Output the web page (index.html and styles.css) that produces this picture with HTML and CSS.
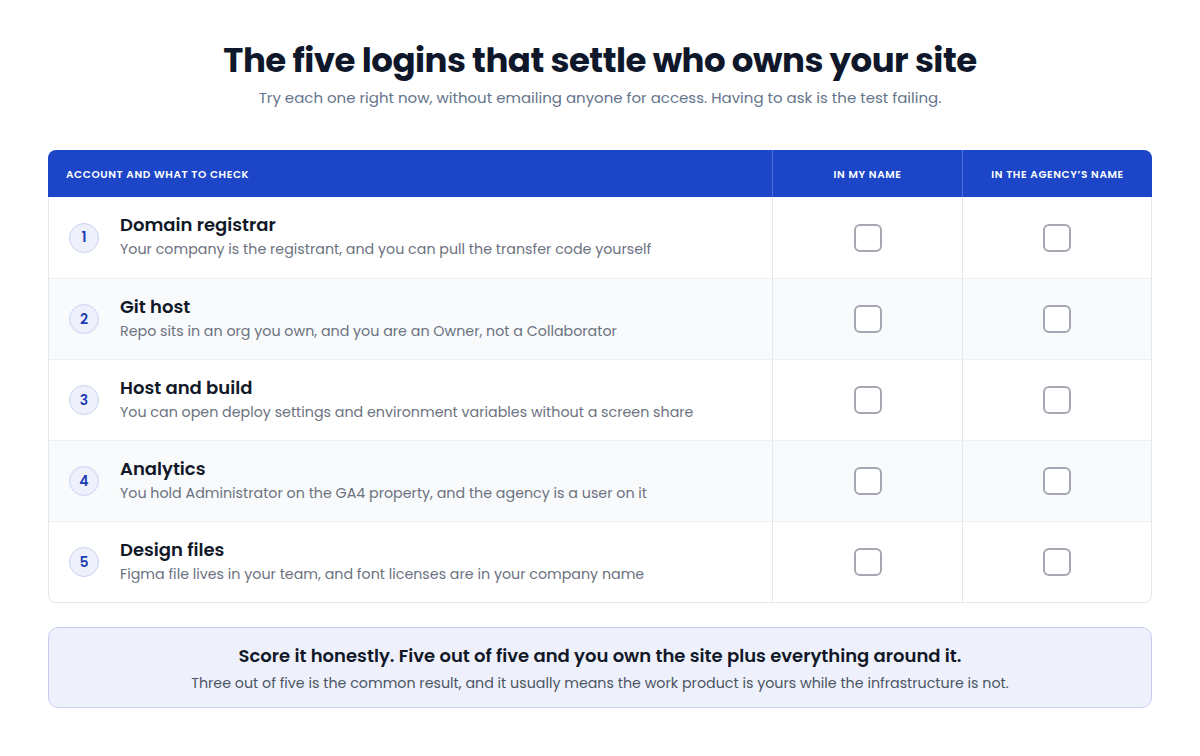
FILE: index.html
```html
<!DOCTYPE html>
<html lang="en">
<head>
<meta charset="utf-8">
<link rel="stylesheet" href="styles.css">
</head>
<body>
<main class="page">
  <header class="intro">
    <h1 class="title">The five logins that settle who owns your site</h1>
    <p class="subtitle">Try each one right now, without emailing anyone for access. Having to ask is the test failing.</p>
  </header>

  <section class="table">
    <div class="thead">
      <div class="th th-left">ACCOUNT AND WHAT TO CHECK</div>
      <div class="th">IN MY NAME</div>
      <div class="th">IN THE AGENCY’S NAME</div>
    </div>
    <div class="tbody">
      <div class="row">
        <div class="cell cell-main">
          <span class="num">1</span>
          <div class="text">
            <div class="name">Domain registrar</div>
            <div class="desc">Your company is the registrant, and you can pull the transfer code yourself</div>
          </div>
        </div>
        <div class="cell cell-check"><span class="box"></span></div>
        <div class="cell cell-check"><span class="box"></span></div>
      </div>
      <div class="row alt">
        <div class="cell cell-main">
          <span class="num">2</span>
          <div class="text">
            <div class="name">Git host</div>
            <div class="desc">Repo sits in an org you own, and you are an Owner, not a Collaborator</div>
          </div>
        </div>
        <div class="cell cell-check"><span class="box"></span></div>
        <div class="cell cell-check"><span class="box"></span></div>
      </div>
      <div class="row">
        <div class="cell cell-main">
          <span class="num">3</span>
          <div class="text">
            <div class="name">Host and build</div>
            <div class="desc">You can open deploy settings and environment variables without a screen share</div>
          </div>
        </div>
        <div class="cell cell-check"><span class="box"></span></div>
        <div class="cell cell-check"><span class="box"></span></div>
      </div>
      <div class="row alt">
        <div class="cell cell-main">
          <span class="num">4</span>
          <div class="text">
            <div class="name">Analytics</div>
            <div class="desc">You hold Administrator on the GA4 property, and the agency is a user on it</div>
          </div>
        </div>
        <div class="cell cell-check"><span class="box"></span></div>
        <div class="cell cell-check"><span class="box"></span></div>
      </div>
      <div class="row">
        <div class="cell cell-main">
          <span class="num">5</span>
          <div class="text">
            <div class="name">Design files</div>
            <div class="desc">Figma file lives in your team, and font licenses are in your company name</div>
          </div>
        </div>
        <div class="cell cell-check"><span class="box"></span></div>
        <div class="cell cell-check"><span class="box"></span></div>
      </div>
    </div>
  </section>

  <aside class="callout">
    <p class="callout-title">Score it honestly. Five out of five and you own the site plus everything around it.</p>
    <p class="callout-body">Three out of five is the common result, and it usually means the work product is yours while the infrastructure is not.</p>
  </aside>
</main>
</body>
</html>
```

FILE: styles.css
```css
* { box-sizing: border-box; }
html, body { margin: 0; padding: 0; background: #ffffff; }
body {
  font-family: "Poppins", "Inter", "Noto Sans", sans-serif;
  color: #111827;
}
.page {
  width: 1104px;
  margin: 0 auto;
  padding-top: 38px;
}
.intro { text-align: center; }
.title {
  margin: 0;
  font-size: 34px;
  line-height: 44px;
  font-weight: 700;
  color: #0f172a;
  letter-spacing: -0.5px;
}
.subtitle {
  margin: 4px 0 0;
  font-size: 15px;
  line-height: 24px;
  color: #64748b;
}
.table { margin-top: 40px; }
.thead {
  display: grid;
  grid-template-columns: 724px 190px 190px;
  background: #1c46c7;
  border-radius: 8px 8px 0 0;
  height: 47px;
}
.th {
  display: flex;
  align-items: center;
  justify-content: center;
  padding-top: 3px;
  color: #ffffff;
  font-size: 10.5px;
  font-weight: 600;
  letter-spacing: 0.6px;
  border-left: 1px solid #4f6fd6;
}
.th-left { justify-content: flex-start; padding-left: 18px; border-left: none; }
.tbody {
  border: 1px solid #e3e7ee;
  border-top: none;
  border-radius: 0 0 8px 8px;
  overflow: hidden;
}
.row {
  display: grid;
  grid-template-columns: 723px 190px 189px;
  height: 81px;
  background: #ffffff;
  border-top: 1px solid #eef0f4;
}
.row:first-child { border-top: none; }
.row.alt { background: #f8fafc; }
.cell { display: flex; align-items: center; }
.cell-main { padding-left: 20px; gap: 21px; }
.cell-check { justify-content: center; border-left: 1px solid #e3e7ee; }
.num {
  flex: none;
  width: 30px;
  height: 30px;
  border-radius: 50%;
  background: #eef1fc;
  border: 1px solid #c9d2f2;
  color: #1d3fb0;
  font-size: 14px;
  font-weight: 600;
  display: flex;
  align-items: center;
  justify-content: center;
}
.text { display: flex; flex-direction: column; padding-bottom: 3px; }
.name {
  font-size: 18px;
  line-height: 26px;
  font-weight: 600;
  color: #111827;
}
.desc {
  font-size: 14.25px;
  line-height: 22px;
  color: #6b7280;
}
.box {
  width: 28px;
  height: 28px;
  border: 2px solid #a3a8b1;
  border-radius: 6px;
  background: #ffffff;
}
.callout {
  margin-top: 24px;
  background: #eef1fc;
  border: 1px solid #c7cff0;
  border-radius: 10px;
  padding: 14px 20px 13px;
  text-align: center;
}
.callout-title {
  margin: 0;
  font-size: 18px;
  line-height: 28px;
  font-weight: 600;
  color: #111827;
}
.callout-body {
  margin: 2px 0 0;
  font-size: 14.25px;
  line-height: 22px;
  color: #4b5563;
}
```
